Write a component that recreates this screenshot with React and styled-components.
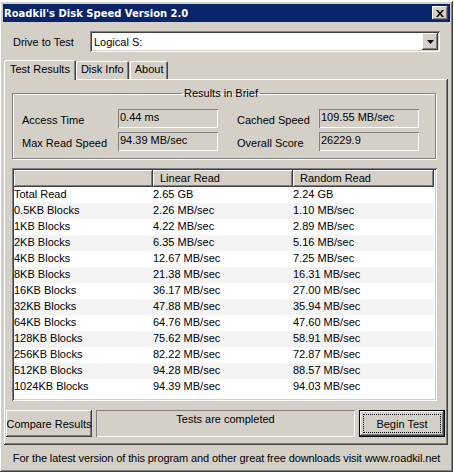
import React from 'react';
import styled, { createGlobalStyle, css } from 'styled-components';

const GlobalStyle = createGlobalStyle`
  html, body { margin: 0; padding: 0; background: #fff; }
  body { font-family: "Liberation Sans", Arial, sans-serif; font-size: 11px; color: #000; }
  * { box-sizing: border-box; }
`;

const raised = css`
  background: #d4d0c8;
  box-shadow: inset -1px -1px #404040, inset 1px 1px #fff, inset -2px -2px #808080, inset 2px 2px #d4d0c8;
`;

const sunken = css`
  box-shadow: inset 1px 1px #808080, inset -1px -1px #fff, inset 2px 2px #404040, inset -2px -2px #d4d0c8;
`;

const Window = styled.div`
  margin-top: 1px;
  width: 453px;
  height: 471px;
  padding: 3px;
  display: flex;
  flex-direction: column;
  ${raised};
  & > * { flex-shrink: 0; }
`;

const TitleBar = styled.div`
  height: 18px;
  background: #0a246a;
  display: flex;
  align-items: center;
  justify-content: space-between;
  padding: 0 2px 0 1px;
`;

const Title = styled.span`
  color: #fff;
  font-family: "DejaVu Sans", Verdana, sans-serif;
  font-weight: bold;
  font-size: 10px;
`;

const CloseButton = styled.div`
  width: 16px;
  height: 14px;
  display: flex;
  align-items: center;
  justify-content: center;
  ${raised};
`;

const DriveRow = styled.div`
  display: flex;
  align-items: center;
  margin: 9px 0 0 0;
  height: 21px;
`;

const DriveLabel = styled.label`
  width: 87px;
  padding-left: 10px;
`;

const Combo = styled.div`
  width: 350px;
  height: 21px;
  background: #fff;
  display: flex;
  align-items: center;
  padding: 2px;
  ${sunken};
`;

const ComboText = styled.span`
  flex: 1;
  padding-left: 2px;
`;

const DropButton = styled.div`
  width: 16px;
  height: 17px;
  display: flex;
  align-items: center;
  justify-content: center;
  ${raised};
`;

const TabStrip = styled.div`
  display: flex;
  align-items: flex-end;
  margin: 8px 0 0 1px;
  height: 19px;
  position: relative;
  z-index: 1;
`;

const Tab = styled.div`
  height: ${p => (p.$active ? 20 : 18)}px;
  margin: ${p => (p.$active ? '0 -1px -1px 0' : '0 0 0 1px')};
  padding: ${p => (p.$active ? '3px 6px 0 6px' : '2px 5px 0 5px')};
  background: #d4d0c8;
  border-top-left-radius: 2px;
  border-top-right-radius: 2px;
  box-shadow: inset 1px 1px #fff, inset -1px 0 #404040, inset -2px 0 #808080;
`;

const Panel = styled.div`
  margin: 0 2px 0 1px;
  height: 366px;
  display: flex;
  flex-direction: column;
  padding: 2px;
  ${raised};
`;

const GroupBox = styled.fieldset`
  margin: 6px 10px 0 6px;
  padding: 10px 15px 7px 9px;
  border: 1px solid #808080;
  box-shadow: inset 1px 1px #fff, 1px 1px #fff;
  display: grid;
  grid-template-columns: 96px 100px 19px 82px 100px;
  row-gap: 4px;
`;

const Legend = styled.legend`
  margin: 0 auto;
  padding: 0 2px;
`;

const FieldLabel = styled.span`
  display: flex;
  align-items: center;
  padding-top: 3px;
  white-space: nowrap;
  grid-column: ${p => p.$col};
`;

const ReadOnlyBox = styled.div`
  height: 19px;
  padding: 2px 2px;
  box-shadow: inset 1px 1px #808080, inset -1px -1px #fff;
  grid-column: ${p => p.$col};
`;

const ListView = styled.div`
  margin: 9px 9px 0 6px;
  height: 233px;
  background: #fff;
  padding: 2px;
  ${sunken};
`;

const HeaderRow = styled.div`
  display: grid;
  grid-template-columns: 139px 140px 141px;
  height: 17px;
`;

const HeaderCell = styled.div`
  padding: 2px 7px;
  ${raised};
`;

const Row = styled.div`
  display: grid;
  grid-template-columns: 139px 140px 141px;
  height: 16px;
  background: ${p => (p.$odd ? '#f4f4f4' : '#fff')};
  width: 420px;
`;

const Cell = styled.div`
  padding: 1px 1px 0 0;
  white-space: nowrap;
`;

const BottomRow = styled.div`
  margin-top: auto;
  display: flex;
  gap: 4px;
  height: 27px;
  margin-right: 1px;
  margin-bottom: 6px;
`;

const Button = styled.div`
  width: 86px;
  display: flex;
  align-items: center;
  justify-content: center;
  white-space: nowrap;
  ${raised};
  ${p =>
    p.$default &&
    css`
      border: 1px solid #000;
      box-shadow: inset -1px -1px #404040, inset 1px 1px #fff, inset -2px -2px #808080;
      padding: 3px;
    `}
`;

const FocusRing = styled.div`
  flex: 1;
  align-self: stretch;
  border: 1px dotted #000;
  display: flex;
  align-items: center;
  justify-content: center;
`;

const StatusPanel = styled.div`
  flex: 1;
  text-align: center;
  padding-top: 3px;
  box-shadow: inset 1px 1px #808080, inset -1px -1px #fff;
`;

const Footer = styled.div`
  text-align: center;
  white-space: nowrap;
  letter-spacing: -0.1px;
  padding-top: 7px;
`;

const rows = [
  ['Total Read', '2.65 GB', '2.24 GB'],
  ['0.5KB Blocks', '2.26 MB/sec', '1.10 MB/sec'],
  ['1KB Blocks', '4.22 MB/sec', '2.89 MB/sec'],
  ['2KB Blocks', '6.35 MB/sec', '5.16 MB/sec'],
  ['4KB Blocks', '12.67 MB/sec', '7.25 MB/sec'],
  ['8KB Blocks', '21.38 MB/sec', '16.31 MB/sec'],
  ['16KB Blocks', '36.17 MB/sec', '27.00 MB/sec'],
  ['32KB Blocks', '47.88 MB/sec', '35.94 MB/sec'],
  ['64KB Blocks', '64.76 MB/sec', '47.60 MB/sec'],
  ['128KB Blocks', '75.62 MB/sec', '58.91 MB/sec'],
  ['256KB Blocks', '82.22 MB/sec', '72.87 MB/sec'],
  ['512KB Blocks', '94.28 MB/sec', '88.57 MB/sec'],
  ['1024KB Blocks', '94.39 MB/sec', '94.03 MB/sec'],
];

const App = () => (
  <>
    <GlobalStyle />
    <Window>
      <TitleBar>
        <Title>Roadkil's Disk Speed Version 2.0</Title>
        <CloseButton>
          <svg width="8" height="7" viewBox="0 0 8 7">
            <path d="M0 0h2l2 2.5L6 0h2L5 3.5 8 7H6L4 4.5 2 7H0l3-3.5z" fill="#000" />
          </svg>
        </CloseButton>
      </TitleBar>
      <DriveRow>
        <DriveLabel>Drive to Test</DriveLabel>
        <Combo>
          <ComboText>Logical S:</ComboText>
          <DropButton>
            <svg width="7" height="4" viewBox="0 0 7 4">
              <path d="M0 0h7L3.5 4z" fill="#000" />
            </svg>
          </DropButton>
        </Combo>
      </DriveRow>
      <TabStrip>
        <Tab $active>Test Results</Tab>
        <Tab>Disk Info</Tab>
        <Tab>About</Tab>
      </TabStrip>
      <Panel>
        <GroupBox>
          <Legend>Results in Brief</Legend>
          <FieldLabel $col={1}>Access Time</FieldLabel>
          <ReadOnlyBox $col={2}>0.44 ms</ReadOnlyBox>
          <FieldLabel $col={4}>Cached Speed</FieldLabel>
          <ReadOnlyBox $col={5}>109.55 MB/sec</ReadOnlyBox>
          <FieldLabel $col={1}>Max Read Speed</FieldLabel>
          <ReadOnlyBox $col={2}>94.39 MB/sec</ReadOnlyBox>
          <FieldLabel $col={4}>Overall Score</FieldLabel>
          <ReadOnlyBox $col={5}>26229.9</ReadOnlyBox>
        </GroupBox>
        <ListView>
          <HeaderRow>
            <HeaderCell />
            <HeaderCell>Linear Read</HeaderCell>
            <HeaderCell>Random Read</HeaderCell>
          </HeaderRow>
          {rows.map((r, i) => (
            <Row key={r[0]} $odd={i % 2 === 1}>
              {r.map(c => (
                <Cell key={c}>{c}</Cell>
              ))}
            </Row>
          ))}
        </ListView>
        <BottomRow>
          <Button>Compare Results</Button>
          <StatusPanel>Tests are completed</StatusPanel>
          <Button $default>
            <FocusRing>Begin Test</FocusRing>
          </Button>
        </BottomRow>
      </Panel>
      <Footer>For the latest version of this program and other great free downloads visit www.roadkil.net</Footer>
    </Window>
  </>
);

export default App;
